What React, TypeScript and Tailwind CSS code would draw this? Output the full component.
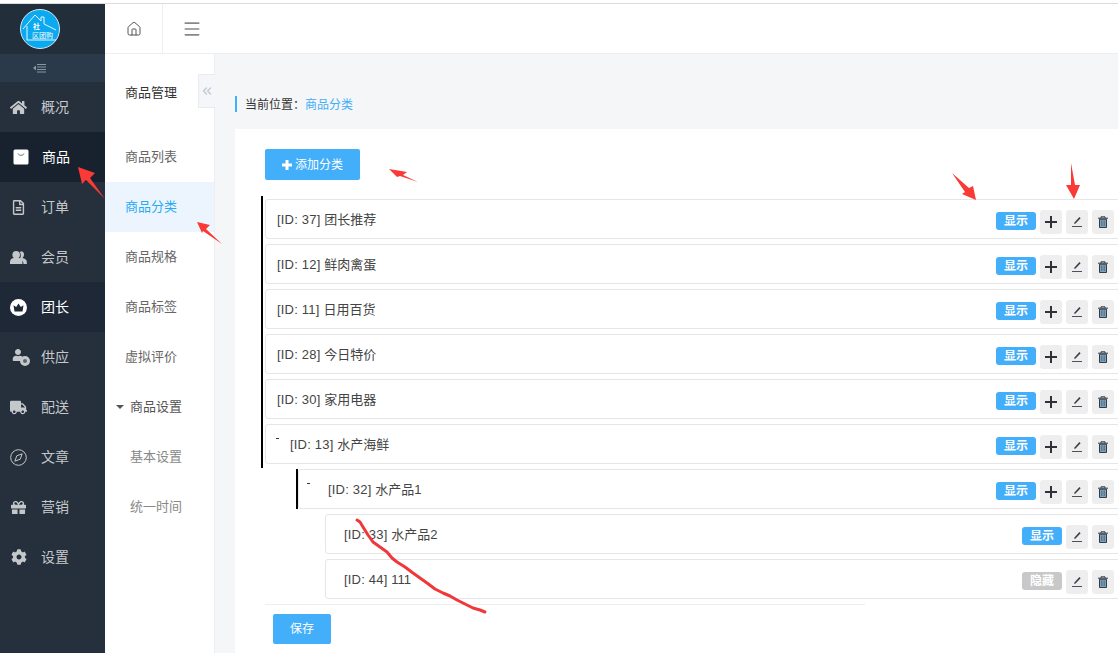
import { Home, Menu, ChevronsLeft } from "lucide-react";
import { FaHome, FaRegFileAlt, FaUser, FaTruck, FaGift, FaCog } from "react-icons/fa";

const font = { fontFamily: '"Liberation Sans", "Noto Sans CJK SC", sans-serif' };

function Bag() {
  return (
    <svg className="translate-x-[2px]" width="16" height="16" viewBox="0 0 16 16">
      <rect x="0.5" y="0.5" width="15" height="15" rx="1.5" fill="#fff" />
      <path d="M5 4.5c.6 2.4 5.4 2.4 6 0" fill="none" stroke="#6b7684" strokeWidth="1" />
    </svg>
  );
}

function Crown() {
  return (
    <svg width="17" height="17" viewBox="0 0 17 17">
      <circle cx="8.5" cy="8.5" r="8.5" fill="#fff" />
      <path d="M3.500 6.200l2.700 1.900L8.500 4.500l2.300 3.600 2.700-1.900-1 6.300h-8z" fill="#1e2836" />
    </svg>
  );
}

function Users() {
  return (
    <svg width="17" height="15" viewBox="0 0 17 15" fill="currentColor">
      <path d="M11 1.200c2 0 3 1.600 3 3.400 0 1.500-.7 2.700-1.500 3.400 2 .7 4.300 1.500 4.300 3.500V14h-3.300c0-2.600-1.500-4-3.700-5 .7-1.100 1-2.300 1-3.500 0-1.300-.3-2.500-1-3.400.6-.6 1.300-.9 2.200-.9z" />
      <circle cx="6.200" cy="4.800" r="3.800" />
      <path d="M0 14v-2.500c0-2 2-3 4-3.700h4.400c2 .7 4 1.700 4 3.700V14z" />
    </svg>
  );
}

function Supplier() {
  return (
    <span className="relative block h-4 w-4 translate-x-[1px]">
      <FaUser size={12} className="absolute left-0 top-0" />
      <span className="absolute bottom-[-1px] right-[-2px] h-[10px] w-[10px] rounded-full border-[3px] border-[#c5c8cb] bg-[#5a6670]" />
    </span>
  );
}

function Compass() {
  return (
    <svg width="17" height="17" viewBox="0 0 17 17" fill="none" stroke="currentColor" strokeWidth="1">
      <circle cx="8.500" cy="8.500" r="7.800" />
      <path d="M12.200 4.800l-2 5.400-5.400 2 2-5.400z" />
    </svg>
  );
}

function Pen() {
  return (
    <svg width="12" height="13" viewBox="0 0 12 13">
      <path d="M3.200 9l.5-1.800L8.400 2l1.200 1.200-5 5.200z" fill="#39404a" />
      <path d="M1 11.500h10" stroke="#4a515b" strokeWidth="1" />
    </svg>
  );
}

function PlusIcon() {
  return (
    <svg width="12" height="12" viewBox="0 0 12 12">
      <path d="M6 0v12M0 6h12" stroke="#2f3338" strokeWidth="2" />
    </svg>
  );
}

function Trash() {
  return (
    <svg width="10" height="12" viewBox="0 0 10 12">
      <path d="M0 2.200h10M3 2.200V.8h4v1.400" fill="none" stroke="#333b45" strokeWidth="1" />
      <path d="M1.500 3.200h7v8.300h-7z" fill="#7ea3bf" stroke="#333b45" strokeWidth="1" />
      <path d="M3.800 4.500v5.500M6.200 4.500v5.500" stroke="#333b45" strokeWidth="0.600" />
    </svg>
  );
}

const sideItems = [
  { label: "概况", icon: <FaHome size={17} /> },
  { label: "商品", icon: <Bag />, active: "bg-[#18212e]" },
  { label: "订单", icon: <FaRegFileAlt size={15} /> },
  { label: "会员", icon: <Users /> },
  { label: "团长", icon: <Crown />, active: "bg-[#1e2836]" },
  { label: "供应", icon: <Supplier /> },
  { label: "配送", icon: <FaTruck size={17} /> },
  { label: "文章", icon: <Compass /> },
  { label: "营销", icon: <FaGift size={15} /> },
  { label: "设置", icon: <FaCog size={16} /> },
];

function Sidebar() {
  return (
    <aside className="flex h-full w-[105px] shrink-0 flex-col bg-[#25303c]">
      <div className="flex h-[50px] items-center bg-[#222e3a] pl-5">
        <svg width="40" height="40" viewBox="0 0 40 40">
          <circle cx="20" cy="20" r="19.500" fill="#0aa9f0" stroke="#cfe9f7" strokeWidth="1" />
          <path d="M3 20L15 6l6 6V8h3v7l12 6M7 17v14h29" fill="none" stroke="#e8f7ff" strokeWidth="1" />
          <text x="13" y="20" fontSize="7" fill="#fff" fontWeight="700">社</text>
          <text x="12" y="29" fontSize="7" fill="#fff">区团购</text>
        </svg>
      </div>
      <div className="flex h-[28px] items-center bg-[#2a3a4a] pl-[33px] text-[#8b97a3]">
        <svg width="14" height="10" viewBox="0 0 14 10">
          <path d="M0 5l3-2.500v5z" fill="currentColor" />
          <path d="M4 1.500h9M4 4h9M4 6.500h9M4 9h9" stroke="currentColor" strokeWidth="1" />
        </svg>
      </div>
      {sideItems.map((item) => (
        <div
          key={item.label}
          className={`flex h-[50px] items-center text-sm ${item.active ? item.active + " text-white" : "text-[#c5c8cb]"}`}
        >
          <span className="flex w-[41px] justify-center">
            <span className="flex w-[19px] -translate-x-[2px] justify-center">{item.icon}</span>
          </span>
          <span className={item.label === "商品" ? "ml-px" : ""}>{item.label}</span>
        </div>
      ))}
    </aside>
  );
}

const subItems = ["商品列表", "商品分类", "商品规格", "商品标签", "虚拟评价"];

function SubNav() {
  return (
    <div className="relative h-full w-[110px] shrink-0 border-r border-[#eceef0] bg-white text-[13px]">
      <div className="flex h-[78px] items-center pl-5 text-[#333]">商品管理</div>
      {subItems.map((s) => (
        <div
          key={s}
          className={`flex h-[50px] items-center pl-5 ${s === "商品分类" ? "bg-[#ecf5fd] text-[#29aaf5]" : "text-[#666]"}`}
        >
          {s}
        </div>
      ))}
      <div className="flex h-[50px] items-center pl-[11px] text-[#555]">
        <span className="mr-[6px] h-0 w-0 border-x-[4px] border-t-[4px] border-x-transparent border-t-[#555]" />
        商品设置
      </div>
      <div className="flex h-[50px] items-center pl-[25px] text-[#888]">基本设置</div>
      <div className="flex h-[50px] items-center pl-[25px] text-[#888]">统一时间</div>
      <div className="absolute right-[-1px] top-[20px] flex h-[34px] w-[17px] items-center justify-center border border-r-0 border-[#e9ebee] bg-[#f4f6f9] text-[#c4cbd3]">
        <ChevronsLeft size={14} strokeWidth={2.5} />
      </div>
    </div>
  );
}

function Row({ id, name, indent, hidden, noAdd, caret, caretLeft }: {
  id: number;
  name: string;
  indent: string;
  hidden?: boolean;
  noAdd?: boolean;
  caret?: boolean;
  caretLeft?: string;
}) {
  return (
    <div className="relative flex h-10 w-full items-center rounded-[3px] border border-[#e6e6e6] bg-white pr-[5px] text-[13px] text-[#444]">
      {caret && <span className={`absolute top-[13px] h-[1px] w-[3px] bg-[#333] ${caretLeft}`} />}
      <span className={`flex-1 pt-[2px] ${indent}`}>
        <span className="tracking-[0.2px]">[ID: {id}] </span>
        {name}
      </span>
      <span className={`mr-1 mt-[3px] flex h-[18px] w-10 items-center justify-center rounded-[3px] text-xs font-bold text-white ${hidden ? "bg-[#c8c8c8]" : "bg-[#43aefa]"}`}>
        {hidden ? "隐藏" : "显示"}
      </span>
      <div className="mt-[5px] flex gap-1">
        {!noAdd && (
          <span className="flex h-6 w-[22px] items-center justify-center rounded-[3px] bg-[#eee]">
            <PlusIcon />
          </span>
        )}
        <span className="flex h-6 w-[22px] items-center justify-center rounded-[3px] bg-[#eee]">
          <Pen />
        </span>
        <span className="flex h-6 w-[22px] items-center justify-center rounded-[3px] bg-[#eee]">
          <Trash />
        </span>
      </div>
    </div>
  );
}

const topRows = [
  { id: 37, name: "团长推荐" },
  { id: 12, name: "鲜肉禽蛋" },
  { id: 11, name: "日用百货" },
  { id: 28, name: "今日特价" },
  { id: 30, name: "家用电器" },
];

function Overlay() {
  return (
    <svg className="pointer-events-none absolute left-0 top-0" width="1118" height="653" viewBox="0 0 1118 653">
      <g fill="#f93a36">
        <path d="M78 167L95 173 90 178 105 199 86 180 82 184z" />
        <path d="M197 222L210 225 206 229 222 244 203 231 202 233z" />
        <path d="M389 169L407 172 403 175 418 182 400 176 397 177z" />
        <path d="M976 200L973 186 969 188 952 173 965 192 962 194z" />
        <path d="M1074 199L1080 185 1075 185 1071 163 1071 185 1066 185z" />
      </g>
      <polyline
        points="357,520 360,522 363,527 368,535 373,542 380,547 387,552 392,558 397,562 405,567 413,573 420,578 427,583 435,589 443,593 450,596 457,600 465,604 473,608 480,610 485,612"
        fill="none"
        stroke="#f0383a"
        strokeWidth="3"
        strokeLinecap="round"
        strokeLinejoin="round"
      />
    </svg>
  );
}

export default function App() {
  return (
    <div className="relative flex h-[653px] w-[1118px] flex-col overflow-hidden bg-white" style={font}>
      <div className="h-1 shrink-0 border-b border-[#dcdcdc] bg-white" />
      <div className="flex min-h-0 flex-1">
        <Sidebar />
        <div className="flex min-w-0 flex-1 flex-col">
          <header className="flex h-[50px] shrink-0 border-b border-[#eeeeee] bg-white text-[#555]">
            <div className="flex w-[58px] items-center justify-center border-r border-[#eeeeee]">
              <Home size={16} strokeWidth={1.5} />
            </div>
            <div className="flex w-[57px] items-center justify-center text-[#888]">
              <Menu size={20} strokeWidth={2} />
            </div>
          </header>
          <div className="flex min-h-0 flex-1">
            <SubNav />
            <main className="flex min-w-0 flex-1 flex-col bg-[#f5f6f8] pl-5">
              <div className="flex h-[75px] shrink-0 items-start pt-[42px] text-xs">
                <div className="flex h-4 items-center border-l-2 border-[#43aefa] pl-2 pt-[2px] text-[#333]">
                  当前位置：<span className="text-[#43aefa]">商品分类</span>
                </div>
              </div>
              <section className="min-h-0 w-[887px] flex-1 bg-white pl-[30px] pt-5">
                <button className="flex h-[31px] w-[95px] items-center justify-center rounded-[2px] bg-[#43aefa] text-xs text-white">
                  <svg className="mr-[3px]" width="10" height="10" viewBox="0 0 10 10">
                    <path d="M5 0v10M0 5h10" stroke="#fff" strokeWidth="3" />
                  </svg>
                  添加分类
                </button>
                <div className="-ml-1 mt-4 flex w-[859px] flex-col">
                  <div className="flex flex-col gap-[5px] border-l-2 border-black pb-1 pl-[2px] pt-[3px]">
                    {topRows.map((r) => (
                      <Row key={r.id} id={r.id} name={r.name} indent="pl-[11px]" />
                    ))}
                    <Row id={13} name="水产海鲜" indent="pl-[24px]" caret caretLeft="left-[10px]" />
                  </div>
                  <div className="ml-[35px] mt-[1px] flex flex-col">
                    <div className="border-l-2 border-black">
                      <Row id={32} name="水产品1" indent="pl-[29px]" caret caretLeft="left-[8px]" />
                    </div>
                    <div className="ml-[29px] mt-[5px] flex flex-col gap-[5px]">
                      <Row id={33} name="水产品2" indent="pl-[18px]" noAdd />
                      <Row id={44} name="111" indent="pl-[18px]" noAdd hidden />
                    </div>
                  </div>
                </div>
                <div className="mt-[5px] w-[600px] border-t border-[#eeeeee] pl-2 pt-[9px]">
                  <button className="h-[30px] w-[58px] rounded-[2px] bg-[#43aefa] text-xs text-white">保存</button>
                </div>
              </section>
            </main>
          </div>
        </div>
      </div>
      <Overlay />
    </div>
  );
}
